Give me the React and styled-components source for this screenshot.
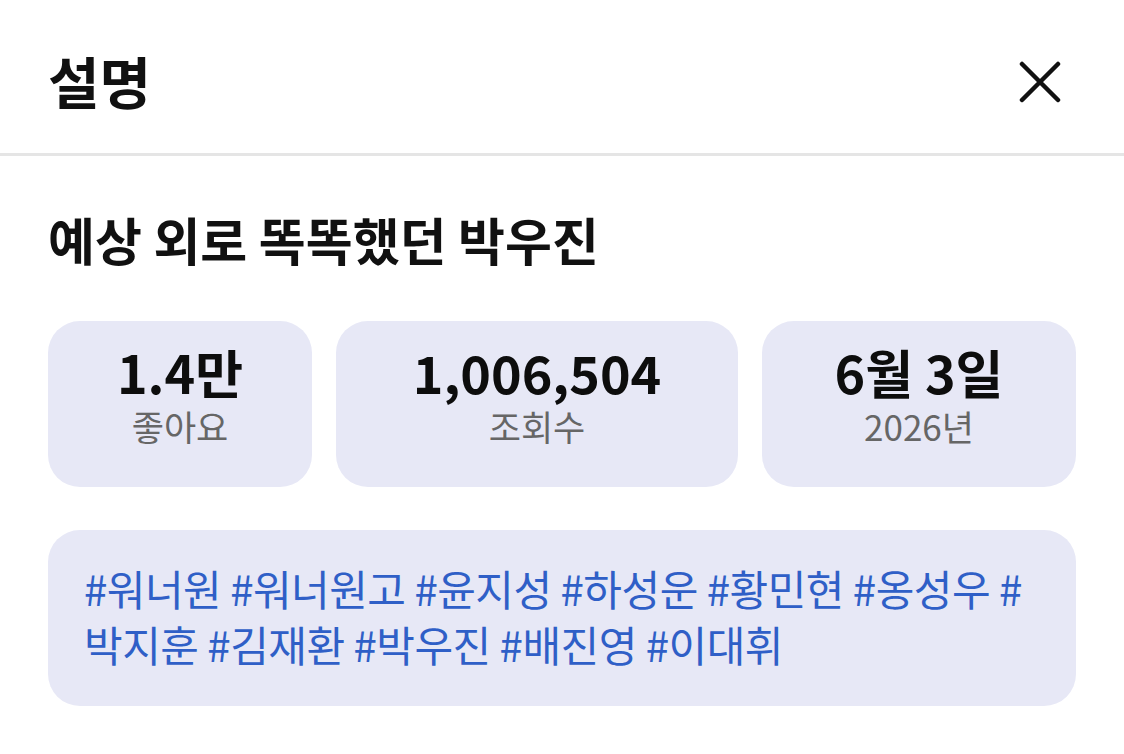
import React from "react";
import styled, { createGlobalStyle } from "styled-components";

const Global = createGlobalStyle`
  html, body { margin: 0; padding: 0; background: #fff; }
  body { font-family: "Noto Sans CJK KR", "Noto Sans", sans-serif; }
`;

const Sheet = styled.div`
  width: 1124px;
  background: #fff;
`;

const Header = styled.header`
  display: flex;
  align-items: center;
  justify-content: space-between;
  height: 156px;
  padding: 0 48px;
  box-sizing: border-box;
  border-bottom: 3px solid #e5e5e5;
`;

const Title = styled.h1`
  margin: 0;
  font-size: 56px;
  line-height: 64px;
  font-weight: 700;
  color: #111;
  transform: translateY(3px);
`;

const CloseBtn = styled.button`
  border: 0;
  background: none;
  padding: 0;
  width: 42px;
  height: 42px;
  display: flex;
  align-items: center;
  justify-content: center;
  margin-right: 15px;
  transform: translateY(5px);
  cursor: pointer;
`;

const Body = styled.div`
  padding: 48px 48px 0;
  display: flex;
  flex-direction: column;
`;

const VideoTitle = styled.h2`
  margin: 0;
  font-size: 51px;
  font-weight: 700;
  color: #111;
  line-height: 70px;
`;

const Stats = styled.div`
  display: grid;
  grid-template-columns: 264fr 402fr 314fr;
  gap: 24px;
  margin-top: 47px;
`;

const StatCard = styled.div`
  height: 166px;
  box-sizing: border-box;
  border-radius: 32px;
  background: #e7e8f6;
  display: flex;
  flex-direction: column;
  align-items: center;
  padding-top: 22px;
`;

const StatValue = styled.div`
  font-size: 52px;
  font-weight: 700;
  color: #0d0d0d;
  line-height: 58px;
  white-space: nowrap;
`;

const StatLabel = styled.div`
  font-size: 35px;
  font-weight: 400;
  color: #666;
  line-height: 42px;
  margin-top: 4px;
`;

const Tags = styled.div`
  margin-top: 43px;
  border-radius: 32px;
  background: #e7e8f6;
  padding: 30px 36px 34px;
  font-size: 42px;
  line-height: 56px;
  color: #2f5fc7;
  letter-spacing: -0.5px;
`;

const stats = [
  { value: "1.4만", label: "좋아요" },
  { value: "1,006,504", label: "조회수" },
  { value: "6월 3일", label: "2026년" },
];

export default function App() {
  return (
    <Sheet>
      <Global />
      <Header>
        <Title>설명</Title>
        <CloseBtn aria-label="닫기">
          <svg width="42" height="42" viewBox="0 0 42 42" fill="none" stroke="#111" strokeWidth="4.5" strokeLinecap="round">
            <path d="M3 3 L39 39 M39 3 L3 39" />
          </svg>
        </CloseBtn>
      </Header>
      <Body>
        <VideoTitle>예상 외로 똑똑했던 박우진</VideoTitle>
        <Stats>
          {stats.map((s) => (
            <StatCard key={s.label}>
              <StatValue>{s.value}</StatValue>
              <StatLabel>{s.label}</StatLabel>
            </StatCard>
          ))}
        </Stats>
        <Tags>
          #워너원 #워너원고 #윤지성 #하성운 #황민현 #옹성우 #박지훈 #김재환 #박우진 #배진영 #이대휘
        </Tags>
      </Body>
    </Sheet>
  );
}
